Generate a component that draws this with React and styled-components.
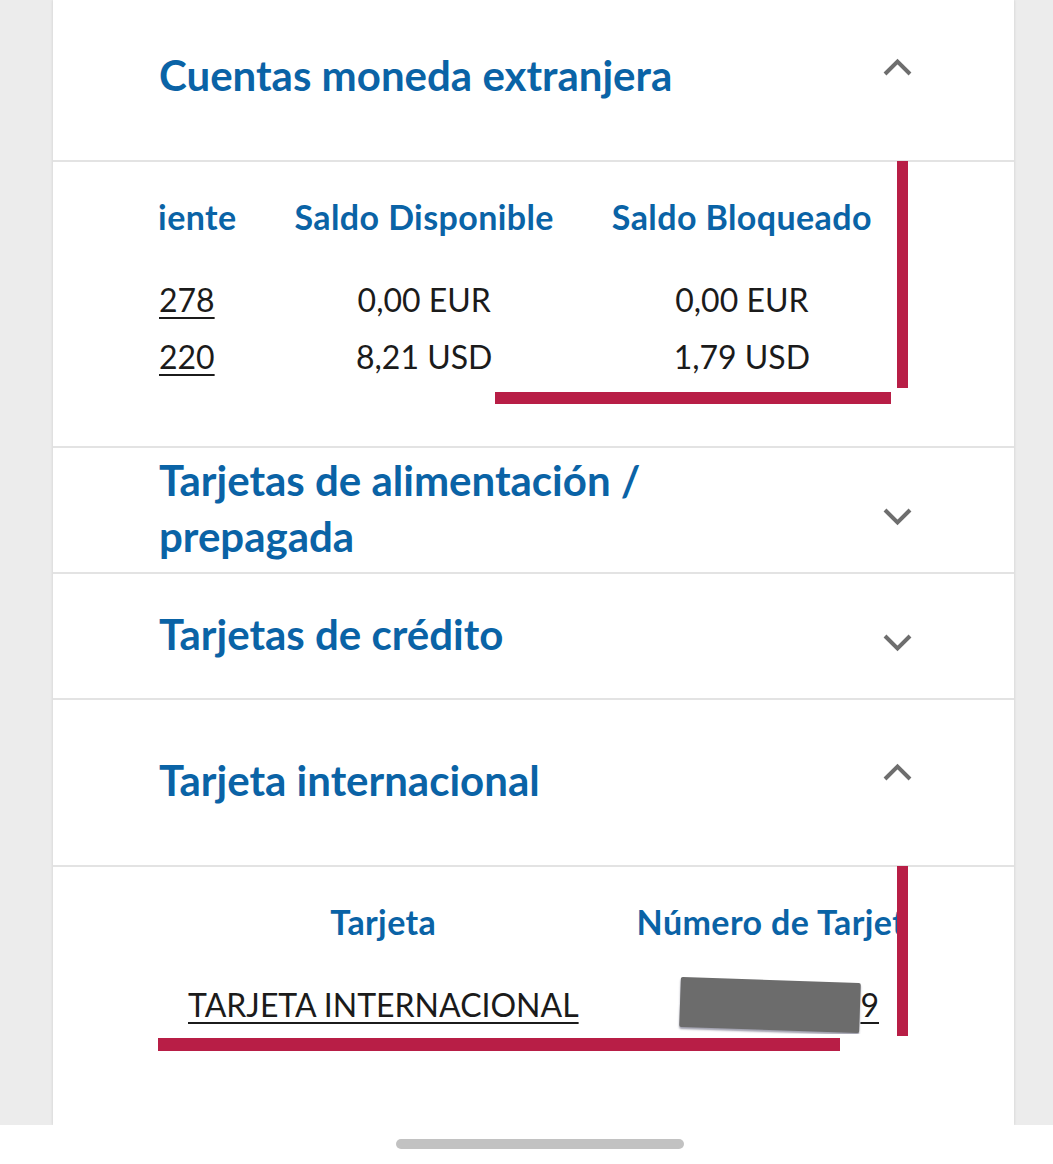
import React, { useLayoutEffect, useRef } from "react";
import styled, { createGlobalStyle } from "styled-components";

const GlobalStyle = createGlobalStyle`
  html, body {
    margin: 0;
    padding: 0;
    background: #ececec;
  }
  body {
    font-family: "Lato", "Noto Sans", "DejaVu Sans", sans-serif;
  }
`;

const Screen = styled.div`
  width: 1053px;
  height: 1164px;
  display: flex;
  flex-direction: column;
  overflow: hidden;
  background: #ececec;
`;

const Stage = styled.div`
  flex: 1;
  min-height: 0;
  display: flex;
  padding: 0 39px 0 53px;
`;

const Card = styled.div`
  flex: 1;
  display: flex;
  flex-direction: column;
  background: #ffffff;
  box-shadow: 0 0 3px rgba(0, 0, 0, 0.14);
  overflow: hidden;
`;

const SectionHeader = styled.div`
  display: flex;
  align-items: center;
  justify-content: space-between;
  box-sizing: border-box;
  min-height: ${(p) => p.$h}px;
  padding: 0 101px ${(p) => p.$pb}px 106px;
  border-bottom: 2px solid #e3e3e3;
`;

const Title = styled.h2`
  margin: 0;
  max-width: 600px;
  font-size: 42px;
  line-height: 56px;
  font-weight: 700;
  color: #0a63a6;
`;

const ChevronBox = styled.svg`
  flex: none;
  width: 31px;
  height: 19px;
  margin-top: ${(p) => (p.$open ? 0 : 18)}px;
  margin-bottom: ${(p) => (p.$open ? 16 : 0)}px;
`;

const Panel = styled.div`
  position: relative;
  box-sizing: border-box;
  padding: 30px 113px 61px 106px;
  border-bottom: ${(p) => (p.$last ? "none" : "2px solid #e3e3e3")};
  flex: ${(p) => (p.$last ? 1 : "none")};
`;

const Scroller = styled.div`
  overflow-x: auto;
  scrollbar-width: none;
  &::-webkit-scrollbar {
    display: none;
  }
`;

const Table = styled.table`
  border-collapse: collapse;
  white-space: nowrap;
`;

const Th = styled.th`
  padding: 0 29px 29px;
  line-height: 50px;
  font-size: 34px;
  letter-spacing: 0.4px;
  font-weight: 700;
  color: #0a63a6;
  text-align: center;
`;

const Td = styled.td`
  padding: 0 29px;
  line-height: 57px;
  font-size: 32px;
  color: #1b1b1b;
  text-align: center;
`;

const Link = styled.span`
  text-decoration: underline;
  text-decoration-thickness: 2px;
  text-underline-offset: 5px;
`;

const Redacted = styled.span`
  display: inline-block;
  width: 180px;
  height: 50px;
  vertical-align: middle;
  background: #6c6c6c;
  border-radius: 2px;
  box-shadow: 0 2px 2px rgba(40, 40, 70, 0.45);
  transform: translateY(-4px) rotate(2deg);
`;

const Mark = styled.div`
  position: absolute;
  left: ${(p) => p.$x}px;
  top: ${(p) => p.$y}px;
  width: ${(p) => p.$w}px;
  height: ${(p) => p.$h}px;
  background: #b81e46;
`;

const HomeBar = styled.div`
  height: 39px;
  display: flex;
  justify-content: center;
  box-sizing: border-box;
  padding: 14px 0 0 26px;
  background: #ffffff;
`;

const Indicator = styled.div`
  width: 288px;
  height: 10px;
  border-radius: 5px;
  background: #c2c2c2;
`;

const Chevron = ({ open }) => (
  <ChevronBox $open={open} viewBox="0 0 31 19">
    <path
      d={open ? "M3 16 L15.5 3.5 L28 16" : "M3 3 L15.5 15.5 L28 3"}
      fill="none"
      stroke="#6e6e6e"
      strokeWidth="4"
    />
  </ChevronBox>
);

const Section = ({ title, open, h, pb = 5 }) => (
  <SectionHeader $h={h} $pb={pb}>
    <Title>{title}</Title>
    <Chevron open={open} />
  </SectionHeader>
);

const accounts = [
  { num: "001000045278", disp: "0,00 EUR", bloq: "0,00 EUR" },
  { num: "001000046220", disp: "8,21 USD", bloq: "1,79 USD" },
];

const App = () => {
  const ref = useRef(null);

  useLayoutEffect(() => {
    if (ref.current) ref.current.scrollLeft = ref.current.scrollWidth;
  }, []);

  return (
    <>
      <GlobalStyle />
      <Screen>
        <Stage>
          <Card>
            <Section title="Cuentas moneda extranjera" open h={162} pb={10} />
            <Panel>
              <Scroller ref={ref}>
                <Table>
                  <thead>
                    <tr>
                      <Th>Cuenta Corriente</Th>
                      <Th>Saldo Disponible</Th>
                      <Th>Saldo Bloqueado</Th>
                    </tr>
                  </thead>
                  <tbody>
                    {accounts.map((a) => (
                      <tr key={a.num}>
                        <Td>
                          <Link>{a.num}</Link>
                        </Td>
                        <Td>{a.disp}</Td>
                        <Td>{a.bloq}</Td>
                      </tr>
                    ))}
                  </tbody>
                </Table>
              </Scroller>
              <Mark $x={844} $y={-1} $w={11} $h={227} />
              <Mark $x={442} $y={230} $w={396} $h={12} />
            </Panel>
            <Section title="Tarjetas de alimentación / prepagada" h={126} />
            <Section title="Tarjetas de crédito" h={126} />
            <Section title="Tarjeta internacional" open h={167} />
            <Panel $last>
              <Scroller>
                <Table>
                  <thead>
                    <tr>
                      <Th>Tarjeta</Th>
                      <Th>Número de Tarjeta</Th>
                    </tr>
                  </thead>
                  <tbody>
                    <tr>
                      <Td>
                        <Link>TARJETA INTERNACIONAL</Link>
                      </Td>
                      <Td>
                        <Redacted />
                        <Link>9</Link>
                      </Td>
                    </tr>
                  </tbody>
                </Table>
              </Scroller>
              <Mark $x={844} $y={-1} $w={11} $h={170} />
              <Mark $x={105} $y={171} $w={682} $h={13} />
            </Panel>
          </Card>
        </Stage>
        <HomeBar>
          <Indicator />
        </HomeBar>
      </Screen>
    </>
  );
};

export default App;
